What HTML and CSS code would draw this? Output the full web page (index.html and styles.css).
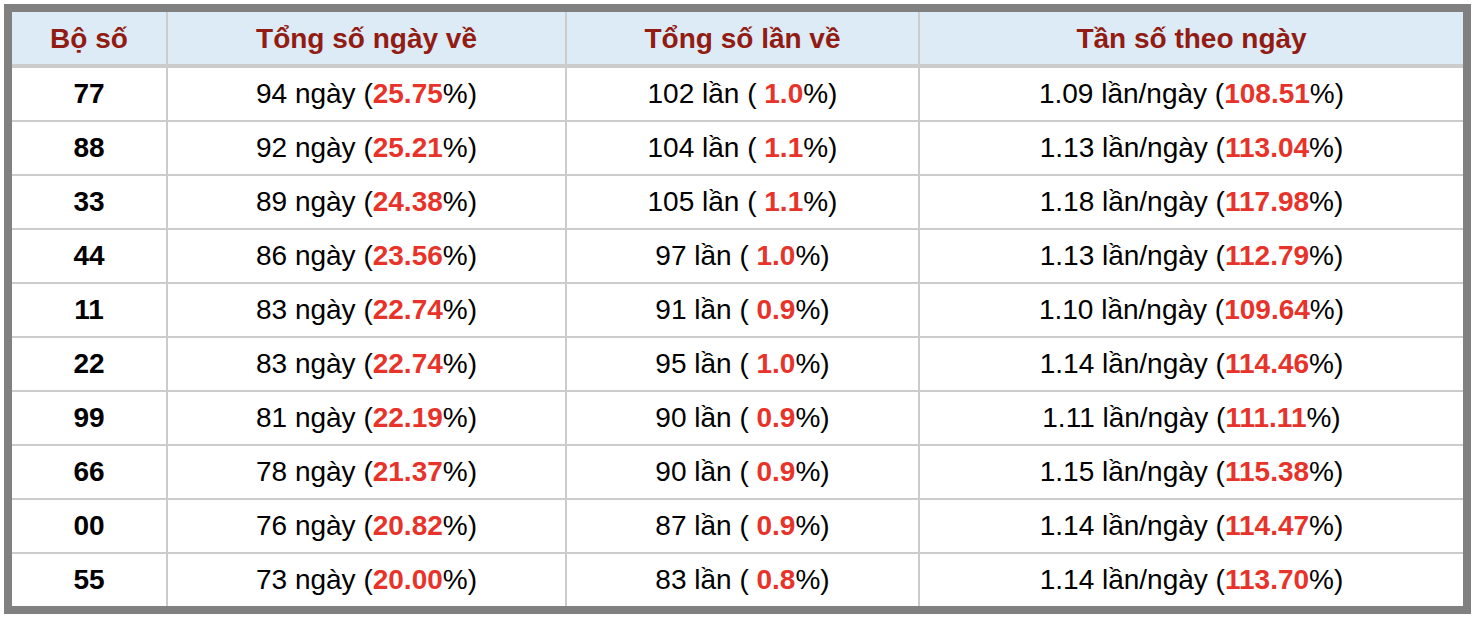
FILE: index.html
```html
<!DOCTYPE html>
<html lang="vi">
<head>
<meta charset="utf-8">
<title>Thống kê bộ số</title>
<link rel="stylesheet" href="styles.css">
</head>
<body>
<table class="stats">
  <thead>
    <tr>
      <th class="c1">Bộ số</th>
      <th class="c2">Tổng số ngày về</th>
      <th class="c3">Tổng số lần về</th>
      <th class="c4">Tần số theo ngày</th>
    </tr>
  </thead>
  <tbody>
    <tr><td class="num">77</td><td>94 ngày (<b>25.75</b>%)</td><td>102 lần ( <b>1.0</b>%)</td><td>1.09 lần/ngày (<b>108.51</b>%)</td></tr>
    <tr><td class="num">88</td><td>92 ngày (<b>25.21</b>%)</td><td>104 lần ( <b>1.1</b>%)</td><td>1.13 lần/ngày (<b>113.04</b>%)</td></tr>
    <tr><td class="num">33</td><td>89 ngày (<b>24.38</b>%)</td><td>105 lần ( <b>1.1</b>%)</td><td>1.18 lần/ngày (<b>117.98</b>%)</td></tr>
    <tr><td class="num">44</td><td>86 ngày (<b>23.56</b>%)</td><td>97 lần ( <b>1.0</b>%)</td><td>1.13 lần/ngày (<b>112.79</b>%)</td></tr>
    <tr><td class="num">11</td><td>83 ngày (<b>22.74</b>%)</td><td>91 lần ( <b>0.9</b>%)</td><td>1.10 lần/ngày (<b>109.64</b>%)</td></tr>
    <tr><td class="num">22</td><td>83 ngày (<b>22.74</b>%)</td><td>95 lần ( <b>1.0</b>%)</td><td>1.14 lần/ngày (<b>114.46</b>%)</td></tr>
    <tr><td class="num">99</td><td>81 ngày (<b>22.19</b>%)</td><td>90 lần ( <b>0.9</b>%)</td><td>1.11 lần/ngày (<b>111.11</b>%)</td></tr>
    <tr><td class="num">66</td><td>78 ngày (<b>21.37</b>%)</td><td>90 lần ( <b>0.9</b>%)</td><td>1.15 lần/ngày (<b>115.38</b>%)</td></tr>
    <tr><td class="num">00</td><td>76 ngày (<b>20.82</b>%)</td><td>87 lần ( <b>0.9</b>%)</td><td>1.14 lần/ngày (<b>114.47</b>%)</td></tr>
    <tr><td class="num">55</td><td>73 ngày (<b>20.00</b>%)</td><td>83 lần ( <b>0.8</b>%)</td><td>1.14 lần/ngày (<b>113.70</b>%)</td></tr>
  </tbody>
</table>
</body>
</html>
```

FILE: styles.css
```css
html, body {
  margin: 0;
  padding: 0;
  background: #ffffff;
}
body {
  padding: 4px;
  font-family: "Liberation Sans", Arial, Helvetica, sans-serif;
  color: #000;
}
.stats {
  width: 1467px;
  table-layout: fixed;
  border: 8px solid #808080;
  border-spacing: 0;
  font-size: 28px;
}
.stats th,
.stats td {
  box-sizing: border-box;
  padding: 0;
  text-align: center;
  vertical-align: middle;
  border-right: 2px solid #cccccc;
  border-bottom: 2px solid #cccccc;
  white-space: nowrap;
}
.stats th:last-child,
.stats td:last-child {
  border-right: none;
}
.stats th {
  height: 56px;
  padding-top: 1px;
  background: #dcebf5;
  color: #921b13;
  font-weight: bold;
  border-bottom-width: 4px;
}
.stats .c1 { width: 156px; }
.stats .c2 { width: 399px; }
.stats .c3 { width: 353px; }
.stats .c4 { width: 543px; }
.stats td {
  height: 54px;
}
.stats tbody tr:last-child td {
  border-bottom: none;
  height: 52px;
}
.stats td.num {
  font-weight: bold;
}
.stats td b {
  color: #e8332a;
  font-weight: bold;
}
```
